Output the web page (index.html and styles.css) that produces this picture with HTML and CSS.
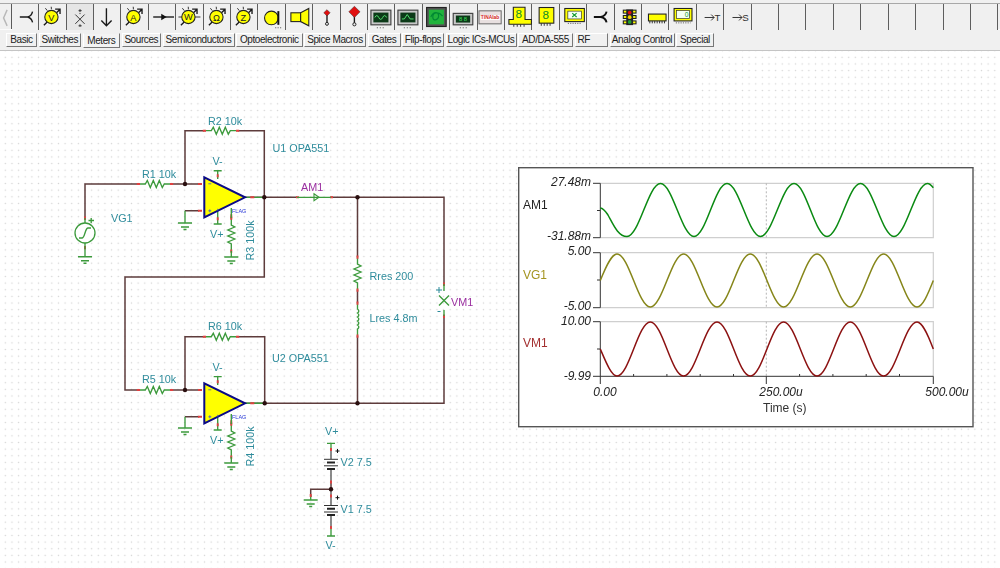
FILE: index.html
```html
<!DOCTYPE html>
<html lang="en">
<head>
<meta charset="utf-8">
<title>TINA schematic</title>
<link rel="stylesheet" href="styles.css">
</head>
<body>
<svg class="defs" aria-hidden="true">
  <defs>
    <symbol id="meter" viewBox="0 0 27 26">
      <path class="i-line" d="M5 21.5 L21 5.5 M16.5 5 L21.5 5 L21.5 10"/>
      <path class="i-thin" d="M6.5 4 L8.5 6.5 M12.5 2.5 L12.7 5"/>
      <circle class="i-yellow" cx="12.7" cy="13" r="6.8"/>
    </symbol>
    <symbol id="scope" viewBox="0 0 27 26">
      <rect class="i-frame" x="3" y="6" width="20.4" height="15"/>
      <rect class="i-screen" x="5.5" y="8.5" width="15.4" height="10"/>
      <path class="i-dots" d="M9 24 h1.4 M12 24 h1.4 M15 24 h1.4"/>
    </symbol>
    <path id="res" d="M0 0H7L9-3.5 12 3.5 15-3.5 18 3.5 21-3.5 24 3.5 26 0H33.4"/>
    <path id="coil" d="M0 0H6A2.6 3.6 0 0 1 10 0A2.6 3.6 0 0 1 14 0A2.6 3.6 0 0 1 18 0A2.6 3.6 0 0 1 22 0A2.6 3.6 0 0 1 26 0H33"/>
    <g id="gnd" class="lead">
      <path d="M-7 0H7M-4 4H4M-1.5 6.5H1.5"/>
    </g>
    <g id="opamp">
      <path class="lead" d="M13.4-6.6V1.7M13.4 30.7V46.7M9.4-6.6H17.4M9.4 46.7H17.4M40.7 20H60"/>
      <path class="pin" d="M13.4-3V0M13.4 40V43M46 20H50M27 37V41"/>
      <path class="opa" d="M0 0V40L40.7 20Z"/>
      <path class="opadot" d="M4 6.5H7M4 33.5H7M5.5 32V35M13.4 31.5V33.5"/>
    </g>
    <g id="bat">
      <path class="batl" d="M-7 0H7M-7 6.5H7"/>
      <path class="batb" d="M-4 3.2H4M-4 9.6H4"/>
    </g>
  </defs>
</svg>

<header class="toolbar">
  <div class="rule"></div>
  <div class="icons">
    <div class="nav"><svg class="icon" viewBox="0 0 12 26"><path class="i-chev" d="M8 5 L4 14 L8 23"/></svg></div>
    <div class="cell"><svg class="icon" viewBox="0 0 27 26"><path class="i-line" d="M8 13H16M21 7.5Q20 12 16 13Q20 14 21 18.5"/></svg></div>
    <div class="cell"><svg class="icon" viewBox="0 0 27 26"><use href="#meter"/><text class="i-t" x="12.7" y="16.7">V</text></svg></div>
    <div class="cell pressed"><svg class="icon" viewBox="0 0 27 26"><path class="i-thin" d="M13.3 5V8M11.8 6.5H15M13.3 9V10M8.5 10.5L18 20M18 10.5L8.5 20M13.3 20.5V23M11.8 22H15"/></svg></div>
    <div class="cell"><svg class="icon" viewBox="0 0 27 26"><path class="i-line" d="M12.7 4V22M7.5 16.5L12.7 22L18 16.5"/></svg></div>
    <div class="cell"><svg class="icon" viewBox="0 0 27 26"><use href="#meter"/><text class="i-t" x="12.7" y="16.7">A</text></svg></div>
    <div class="cell"><svg class="icon" viewBox="0 0 27 26"><path class="i-line" d="M4.3 13H25.6"/><path class="i-fill" d="M12.5 9.8L18 13L12.5 16.2Z"/></svg></div>
    <div class="cell"><svg class="icon" viewBox="0 0 27 26"><path class="i-thin" d="M2.5 13H6M19.5 13H25"/><use href="#meter"/><text class="i-t" x="12.7" y="16.5">W</text></svg></div>
    <div class="cell"><svg class="icon" viewBox="0 0 27 26"><use href="#meter"/><text class="i-t" x="12.7" y="16.7">Ω</text></svg></div>
    <div class="cell"><svg class="icon" viewBox="0 0 27 26"><use href="#meter"/><text class="i-t" x="12.7" y="16.7">Z</text></svg></div>
    <div class="cell"><svg class="icon" viewBox="0 0 27 26"><circle class="i-yellow" cx="13.7" cy="14" r="7"/><path class="i-heavy" d="M20.8 7V21"/><path class="i-dots" d="M17.5 24h1.2M20 24h1.2M22.5 24h1.2"/></svg></div>
    <div class="cell"><svg class="icon" viewBox="0 0 27 26"><rect class="i-yellow" x="5" y="8.7" width="10" height="9"/><path class="i-yellow" d="M15 8.7L23.3 4.3V22L15 17.7Z"/></svg></div>
    <div class="cell"><svg class="icon" viewBox="0 0 27 26"><path class="i-line" d="M14.3 9V19"/><path class="i-red" d="M14.3 5.5L17.5 8.7L14.3 12L11 8.7Z"/><circle class="i-ring" cx="14.3" cy="20" r="1.5"/></svg></div>
    <div class="cell"><svg class="icon" viewBox="0 0 27 26"><path class="i-line" d="M13.7 10V20"/><path class="i-red" d="M13.7 2L19.5 7.7L13.7 13.5L8 7.7Z"/><circle class="i-ring" cx="13.7" cy="20.5" r="1.6"/></svg></div>
    <div class="cell"><svg class="icon" viewBox="0 0 27 26"><use href="#scope"/><path class="i-trace" d="M7 13.5Q9 9.5 11 13.5T15 13.5T19 13.5"/></svg></div>
    <div class="cell"><svg class="icon" viewBox="0 0 27 26"><use href="#scope"/><path class="i-trace" d="M7 15H9.5L12.5 10.5L15.5 15H19"/></svg></div>
    <div class="cell raised"><svg class="icon" viewBox="0 0 27 26"><rect class="i-frame2" x="3.7" y="3.3" width="20" height="19.4"/><rect class="i-green" x="6" y="5.5" width="15.4" height="15"/><path class="i-dark" d="M8 13c3-7 8-5 8-1s-6 6-6 1 6-6 10-1"/></svg></div>
    <div class="cell"><svg class="icon" viewBox="0 0 27 26"><rect class="i-frame" x="3.3" y="9.3" width="20" height="11.7"/><rect class="i-screen" x="6" y="11.5" width="14.6" height="7.2"/><text class="i-digit" x="13.3" y="17.3">8 8</text><path class="i-dots" d="M10 24h1.4M13 24h1.4M16 24h1.4"/></svg></div>
    <div class="cell"><svg class="icon" viewBox="0 0 27 26"><rect class="i-tina" x="1" y="6.7" width="22.7" height="13.3"/><rect class="i-tinab" x="2.5" y="11" width="19.7" height="5"/><text class="i-tinat" x="12.3" y="15">TINAlab</text></svg></div>
    <div class="cell"><svg class="icon" viewBox="0 0 27 26"><path class="i-yellow" d="M8.5 3H20.5V15.5H27V20.5H4V15.5H8.5Z"/><text class="i-8" x="14" y="14.5">8</text><path class="i-thin" d="M9 20.5V23M12.5 20.5V23M16 20.5V23M19.5 20.5V23"/></svg></div>
    <div class="cell"><svg class="icon" viewBox="0 0 27 26"><rect class="i-yellow" x="7.3" y="3.3" width="15" height="16"/><text class="i-8" x="14" y="15.5">8</text><path class="i-thin" d="M9.5 19.3V22M12.5 19.3V22M15.5 19.3V22M18.5 19.3V22"/></svg></div>
    <div class="cell"><svg class="icon" viewBox="0 0 27 26"><rect class="i-yellow" x="4.9" y="4.3" width="20" height="13.4"/><rect class="i-scr" x="8" y="7" width="13.8" height="8"/><path class="i-xg" d="M12.5 9L17 13M17 9L12.5 13"/><path class="i-dots" d="M8 19.5H22"/></svg></div>
    <div class="cell"><svg class="icon" viewBox="0 0 27 26"><path class="i-heavy" d="M7 13H14M20 7.5Q19 12 14 13Q19 14 20 18.5"/></svg></div>
    <div class="cell"><svg class="icon" viewBox="0 0 27 26"><rect class="i-yellow" x="8.5" y="6" width="13" height="3"/><rect class="i-yellow" x="8.5" y="11.5" width="13" height="3"/><rect class="i-yellow" x="8.5" y="17" width="13" height="3"/><rect class="i-black" x="11.5" y="5.3" width="7" height="16"/><circle class="i-l1" cx="15" cy="8.5" r="1.9"/><circle class="i-l2" cx="15" cy="13.2" r="1.9"/><circle class="i-l3" cx="15" cy="18" r="1.9"/></svg></div>
    <div class="cell"><svg class="icon" viewBox="0 0 27 26"><rect class="i-yellow" x="6.6" y="10" width="18" height="7"/><path class="i-thin" d="M8 17V19.5M10.5 17V19.5M13 17V19.5M15.5 17V19.5M18 17V19.5M20.5 17V19.5M23 17V19.5"/></svg></div>
    <div class="cell"><svg class="icon" viewBox="0 0 27 26"><rect class="i-yellow" x="5.2" y="4.3" width="18.3" height="12.7"/><rect class="i-scr" x="7.7" y="6.5" width="13.3" height="8"/><text class="i-zero" x="18" y="13.3">0</text><path class="i-dots" d="M7 19H22"/></svg></div>
    <div class="cell"><svg class="icon" viewBox="0 0 27 26"><path class="i-thin" d="M7.8 13.5H17.5M14.5 10.5L17.5 13.5L14.5 16.5"/><text class="i-lbl" x="18" y="17">T</text></svg></div>
    <div class="cell"><svg class="icon" viewBox="0 0 27 26"><path class="i-thin" d="M8.7 13.5H18.4M15.4 10.5L18.4 13.5L15.4 16.5"/><text class="i-lbl" x="18.7" y="17">S</text></svg></div>
    <div class="cell"></div><div class="cell"></div><div class="cell"></div>
    <div class="cell"></div><div class="cell"></div><div class="cell"></div>
    <div class="cell"></div><div class="cell"></div><div class="cell"></div>
  </div>
  <nav class="tabs">
    <span class="tab">Basic</span>
    <span class="tab">Switches</span>
    <span class="tab active">Meters</span>
    <span class="tab">Sources</span>
    <span class="tab">Semiconductors</span>
    <span class="tab">Optoelectronic</span>
    <span class="tab">Spice Macros</span>
    <span class="tab">Gates</span>
    <span class="tab">Flip-flops</span>
    <span class="tab">Logic ICs-MCUs</span>
    <span class="tab">AD/DA-555</span>
    <span class="tab left">RF</span>
    <span class="tab">Analog Control</span>
    <span class="tab">Special</span>
  </nav>
  <div class="tabs-foot"></div>
</header>

<main class="canvas">
  <svg class="schem" viewBox="0 51 1000 517">
    <!-- wires -->
    <path class="wire" d="M85 218V184H138.3M171.7 184H198M185 184V130.7H204.3M237.7 130.7H264.3V277H125V390H138.3M171.7 390H198M185 390V336.7H204.3M237.7 336.7H264.7V403.3M245 197.3H297M331 197.3H444V284M444 316V403.3H245M357.5 197.3V257M357.5 290V303M357.5 336V403.3M185 210.7H199M185 416.7H199"/>
    <path class="wire" d="M331 481V489.3H310.7V497"/>
    <path class="wire-grey" d="M331 450V459M331 468V482M331 489V506M331 516V528"/>

    <!-- resistors -->
    <use class="lead" href="#res" transform="translate(138.3 184)"/>
    <use class="lead" href="#res" transform="translate(204.3 130.7)"/>
    <use class="lead" href="#res" transform="translate(138.3 390)"/>
    <use class="lead" href="#res" transform="translate(204.3 336.7)"/>
    <use class="lead" href="#res" transform="translate(231.3 218) rotate(90)"/>
    <use class="lead" href="#res" transform="translate(231.3 424) rotate(90)"/>
    <use class="lead" href="#res" transform="translate(357.5 257) rotate(90)"/>
    <use class="lead" href="#coil" transform="translate(357.5 303) rotate(90)"/>

    <path class="pin" d="M136.8 184H140M170 184H173.2M202.8 130.7H206M236 130.7H239.2M136.8 390H140M170 390H173.2M202.8 336.7H206M236 336.7H239.2M231.3 216.5V219.8M231.3 249.5V252.8M231.3 422.5V425.8M231.3 455.5V458.8M357.5 255.5V258.8M357.5 288.5V291.8M357.5 301.5V304.8M357.5 334.5V337.8M296 197.3H299M330 197.3H333M444 282.5V286M444 314.5V318M85 216.5V220M85 246V249.3"/>

    <!-- op amps -->
    <use href="#opamp" transform="translate(204.3 177.3)"/>
    <use href="#opamp" transform="translate(204.3 383.3)"/>
    <path class="lead" d="M231.3 208V218M231.3 251V257M231.3 414V424M231.3 457V463"/>
    <path class="pin" d="M198 184H202M198 210.7H202M198 390H202M198 416.7H202"/>

    <!-- grounds -->
    <path class="lead" d="M185 210.7V223M185 416.7V428M85 243V256.7"/>
    <use href="#gnd" transform="translate(185 223)"/>
    <use href="#gnd" transform="translate(185 428)"/>
    <use href="#gnd" transform="translate(231.3 257)"/>
    <use href="#gnd" transform="translate(231.3 463)"/>
    <use href="#gnd" transform="translate(85 256.7)"/>
    <use href="#gnd" transform="translate(310.7 500)"/>
    <path class="lead" d="M310.7 495V500"/>

    <!-- source -->
    <path class="lead" d="M85 218V223"/>
    <circle class="src" cx="85" cy="233" r="10"/>
    <path class="lead" d="M79 238H82C85 238 85 228 88 228H91"/>
    <path class="lead" d="M88.5 220.5H94M91.2 218V223"/>

    <!-- ammeter -->
    <path class="lead" d="M297 197.3H331"/>
    <path class="amp" d="M314 193.8L319 197.3L314 200.8Z"/>

    <!-- voltmeter -->
    <path class="lead" d="M444 284V291M444 310V316M439 295.5L449 305.5M449 295.5L439 305.5"/>
    <path class="plus" d="M436 290H442M439 287V293"/>
    <path class="minus" d="M437.5 311.5H440.5"/>

    <!-- batteries -->
    <path class="lead" d="M327 443.3H335M331 443.3V450M327 536H335M331 528V536"/>
    <use href="#bat" transform="translate(331 459.3)"/>
    <use href="#bat" transform="translate(331 505.5)"/>
    <path class="pin" d="M331 448V451M331 480.5V483.5M331 494.5V497.5M331 526V529M310.7 494V497"/>
    <path class="plus-b" d="M335.5 451H339.5M337.5 449V453M335.5 497.7H339.5M337.5 495.7V499.7"/>

    <!-- nodes -->
    <g class="node">
      <circle cx="185" cy="184" r="2.2"/><circle cx="264.3" cy="197.3" r="2.2"/><circle cx="357.5" cy="197.3" r="2.2"/>
      <circle cx="185" cy="390" r="2.2"/><circle cx="264.7" cy="403.3" r="2.2"/><circle cx="357.5" cy="403.3" r="2.2"/>
      <circle cx="331" cy="489.3" r="2.2"/>
    </g>

    <!-- labels -->
    <g class="lab">
      <text x="208" y="125">R2 10k</text>
      <text x="142" y="177.7">R1 10k</text>
      <text x="272.5" y="151.7">U1 OPA551</text>
      <text x="212.5" y="165">V-</text>
      <text x="210" y="237.7">V+</text>
      <text x="111" y="222">VG1</text>
      <text x="208" y="330">R6 10k</text>
      <text x="142" y="383">R5 10k</text>
      <text x="272" y="361.7">U2 OPA551</text>
      <text x="212.5" y="371">V-</text>
      <text x="210" y="444">V+</text>
      <text x="369.5" y="280">Rres 200</text>
      <text x="369.5" y="322">Lres 4.8m</text>
      <text x="325" y="435">V+</text>
      <text x="325.5" y="549">V-</text>
      <text x="340.5" y="466">V2 7.5</text>
      <text x="340.5" y="512.7">V1 7.5</text>
      <text transform="translate(254 260.5) rotate(-90)">R3 100k</text>
      <text transform="translate(254 466.5) rotate(-90)">R4 100k</text>
    </g>
    <text class="lab-p" x="301" y="191">AM1</text>
    <text class="lab-p" x="451" y="306">VM1</text>
    <text class="flag" x="232" y="213">FLAG</text>
    <text class="flag" x="232" y="419">FLAG</text>
  </svg>

  <svg class="chart" viewBox="518 167 456 261">
    <rect class="frame" x="518.7" y="167.7" width="454.3" height="259"/>
    <path class="grid" d="M600.3 183.3H933.3V237.7H600.3M600.3 252.7H933.3V307.7H600.3M600.3 321.7H933.3V376.3"/>
    <path class="cursor" d="M766.3 183.3V237.7M766.3 252.7V307.7M766.3 321.7V376.3"/>
    <path class="axis" d="M593 183.3H600.3V237.7H593M597 210.5H600.3M593 252.7H600.3V307.7H593M597 280H600.3M593 321.7H600.3V376.3M597 349H600.3M593 376.3H933.3M600.3 376.3V384M766.3 376.3V384M933.3 376.3V384M633.6 376.3V374M666.9 376.3V374M700.2 376.3V374M733.5 376.3V374M799.6 376.3V374M832.9 376.3V374M866.2 376.3V374M899.5 376.3V374"/>
    <path class="tr-am" d="M600.3 208C604 208.5 606 212 608 215C613 224 618 236.5 627 236.5C639.1 236.5 648.4 183.5 660.5 183.5C672.6 183.5 681.9 236.5 694 236.5C706.1 236.5 714.9 183.5 727 183.5C739.1 183.5 748.4 236.5 760.5 236.5C772.6 236.5 781.9 183.5 794 183.5C806.1 183.5 814.9 236.5 827 236.5C839.1 236.5 848.4 183.5 860.5 183.5C872.6 183.5 881.9 236.5 894 236.5C906.1 236.5 915.4 183.5 927.5 183.5C929.5 183.5 931.5 185.5 933.3 187.7"/>
    <path class="tr-vg" d="M600.3 280.5C605.9 266.6 611.4 254 617 254C629.1 254 638.2 307 650.3 307C662.4 307 671.5 254 683.6 254C695.7 254 704.9 307 717 307C729.1 307 738.2 254 750.3 254C762.4 254 771.5 307 783.6 307C795.7 307 804.9 254 817 254C829.1 254 838.2 307 850.3 307C862.4 307 871.5 254 883.6 254C895.7 254 904.9 307 917 307C922.6 307 928 294 933.3 280.5"/>
    <path class="tr-vm" d="M600.3 349C605.9 362 611.4 376 617 376C629.1 376 638.2 322 650.3 322C662.4 322 671.5 376 683.6 376C695.7 376 704.9 322 717 322C729.1 322 738.2 376 750.3 376C762.4 376 771.5 322 783.6 322C795.7 322 804.9 376 817 376C829.1 376 838.2 322 850.3 322C862.4 322 871.5 376 883.6 376C895.7 376 904.9 322 917 322C922.6 322 928 335 933.3 349"/>
    <g class="val">
      <text x="591" y="186">27.48m</text>
      <text x="591" y="240">-31.88m</text>
      <text x="591" y="255">5.00</text>
      <text x="591" y="310">-5.00</text>
      <text x="591" y="325">10.00</text>
      <text x="591" y="380">-9.99</text>
    </g>
    <g class="val-x">
      <text x="605" y="396">0.00</text>
      <text x="781" y="396">250.00u</text>
      <text x="947" y="396">500.00u</text>
    </g>
    <text class="time" x="763" y="412">Time (s)</text>
    <text class="name n-am" x="523" y="209">AM1</text>
    <text class="name n-vg" x="523" y="279">VG1</text>
    <text class="name n-vm" x="523" y="347">VM1</text>
  </svg>
</main>
</body>
</html>
```

FILE: styles.css
```css
* { box-sizing: border-box; }
html, body { margin: 0; padding: 0; width: 1000px; height: 568px; overflow: hidden; background: #fff; }
body { display: flex; flex-direction: column; font-family: "Liberation Sans", Arial, sans-serif; }
.defs { position: absolute; width: 0; height: 0; }

/* toolbar */
.toolbar { flex: none; background: #f0f0f0; }
.rule { height: 3.5px; background: #f0f0f0; border-bottom: 1.5px solid #a8a8a8; }
.icons { display: flex; height: 26px; border-bottom: 1px solid #fbfbfb; }
.nav { flex: none; width: 11.7px; border-right: 1.5px solid #5a5a5a; }
.cell { flex: none; width: 27.42px; height: 26px; border-right: 1.5px solid #5e5e5e; background: #f0f0f0; }
.icon { display: block; width: 100%; height: 26px; overflow: visible; }
.pressed { background: #e6e6e6; }
.raised { background: #e9e9e9; }

.i-yellow { fill: #ff0; stroke: #222; stroke-width: 1.1; }
.i-line { fill: none; stroke: #1a1a1a; stroke-width: 1.4; }
.i-heavy { fill: none; stroke: #111; stroke-width: 2; }
.i-thin { fill: none; stroke: #333; stroke-width: 1; }
.i-dots { fill: none; stroke: #666; stroke-width: 1; stroke-dasharray: 1.2 1.2; }
.i-fill { fill: #111; }
.i-chev { fill: none; stroke: #b8b8b8; stroke-width: 1.6; }
.i-red { fill: #e01010; stroke: #333; stroke-width: .5; }
.i-ring { fill: #f0f0f0; stroke: #222; stroke-width: 1; }
.i-t { font-size: 9.5px; text-anchor: middle; fill: #222; }
.i-lbl { font-size: 10px; fill: #333; }
.i-frame { fill: #c8c8c8; stroke: #444; stroke-width: 1.2; }
.i-frame2 { fill: #555; stroke: #222; stroke-width: 1.2; }
.i-screen { fill: #0c3a18; }
.i-trace { fill: none; stroke: #55e070; stroke-width: 1; }
.i-green { fill: #22b33c; }
.i-dark { fill: none; stroke: #083; stroke-width: 1.2; }
.i-digit { font-size: 6px; text-anchor: middle; fill: #3fe060; }
.i-tina { fill: #e8e0e0; stroke: #666; stroke-width: 1; }
.i-tinab { fill: #fff; }
.i-tinat { font-size: 5px; font-weight: bold; text-anchor: middle; fill: #d02020; }
.i-8 { font-size: 12px; text-anchor: middle; fill: #0a8a2a; }
.i-scr { fill: #f4fff4; stroke: #333; stroke-width: .7; }
.i-xg { fill: none; stroke: #129a30; stroke-width: 1.2; }
.i-zero { font-size: 7px; text-anchor: middle; fill: #129a30; }
.i-black { fill: #222; }
.i-l1 { fill: #e01010; }
.i-l2 { fill: #f0d000; }
.i-l3 { fill: #20a030; }

/* tab row */
.tabs {
  display: grid;
  grid-template-columns: 31px 42.5px 37.5px 39.5px 72px 66.5px 62px 33px 42px 71px 55px 33.5px 65px 38px;
  column-gap: 1.5px;
  align-items: start;
  height: 18px;
  padding: 3px 0 0 6px;
}
.tab {
  height: 14.5px;
  line-height: 12.5px;
  font-size: 10px;
  letter-spacing: -.42px;
  color: #222;
  text-align: center;
  white-space: nowrap;
  background: #f0f0f0;
  border-top: 1px solid #fff;
  border-left: 1px solid #fff;
  border-right: 1px solid #777;
  border-bottom: 1.5px solid #777;
}
.tab.left { text-align: left; padding-left: 2px; }
.tab.active { height: 15.5px; line-height: 14.5px; background: #f3f3f3; border-top-color: #f0f0f0; }
.tabs-foot { height: 3.5px; background: #f0f0f0; border-bottom: 1.5px solid #c4c4c4; }

/* canvas */
.canvas {
  position: relative;
  flex: 1;
  background-color: #fff;
  background-image: radial-gradient(circle, #d4d4d4 .7px, transparent 1px);
  background-size: 6.65px 6.65px;
  background-position: 2px 3px;
}
.schem { position: absolute; left: 0; top: 0; width: 1000px; height: 517px; filter: blur(.25px); }
.chart { position: absolute; left: 518px; top: 116px; width: 456px; height: 261px; filter: blur(.2px); }

.wire { fill: none; stroke: #5e3c3c; stroke-width: 1.5; }
.wire-grey { fill: none; stroke: #666; stroke-width: 1.5; }
.lead, .lead path { fill: none; stroke: #3c9a3c; stroke-width: 1.35; }
.pin { fill: none; stroke: #e04040; stroke-width: 1.9; }
.opa { fill: #ff0; stroke: #0a0a86; stroke-width: 2; stroke-linejoin: miter; }
.opadot { fill: none; stroke: #3b55c8; stroke-width: .8; }
.src { fill: #fff; stroke: #3c9a3c; stroke-width: 1.3; }
.amp { fill: none; stroke: #3c9a3c; stroke-width: 1.1; }
.plus { fill: none; stroke: #2a8a9a; stroke-width: 1; }
.minus { fill: none; stroke: #2a8a9a; stroke-width: 1; }
.plus-b { fill: none; stroke: #111; stroke-width: 1; }
.batl { fill: none; stroke: #333; stroke-width: 1; }
.batb { fill: none; stroke: #222; stroke-width: 2; }
.node circle { fill: #2a0f0f; }
.lab text { font-size: 10.8px; fill: #2f8c9c; }
.lab-p { font-size: 10.8px; fill: #9a2fa0; }
.flag { font-size: 5.5px; fill: #2a3ad8; }

.frame { fill: #fff; stroke: #555; stroke-width: 1.4; }
.grid { fill: none; stroke: #cfcfcf; stroke-width: 1.2; }
.cursor { fill: none; stroke: #b5b5b5; stroke-width: 1; stroke-dasharray: 2 2; }
.axis { fill: none; stroke: #333; stroke-width: 1; }
.tr-am, .tr-vg, .tr-vm { fill: none; stroke-width: 1.5; }
.tr-am { stroke: #0a8a12; }
.tr-vg { stroke: #86861a; }
.tr-vm { stroke: #8c1212; }
.val text { font-size: 12px; font-style: italic; text-anchor: end; fill: #222; }
.val-x text { font-size: 12px; font-style: italic; text-anchor: middle; fill: #222; }
.time { font-size: 12px; fill: #333; }
.name { font-size: 12px; }
.n-am { fill: #222; }
.n-vg { fill: #a49420; }
.n-vm { fill: #a33030; }
```
